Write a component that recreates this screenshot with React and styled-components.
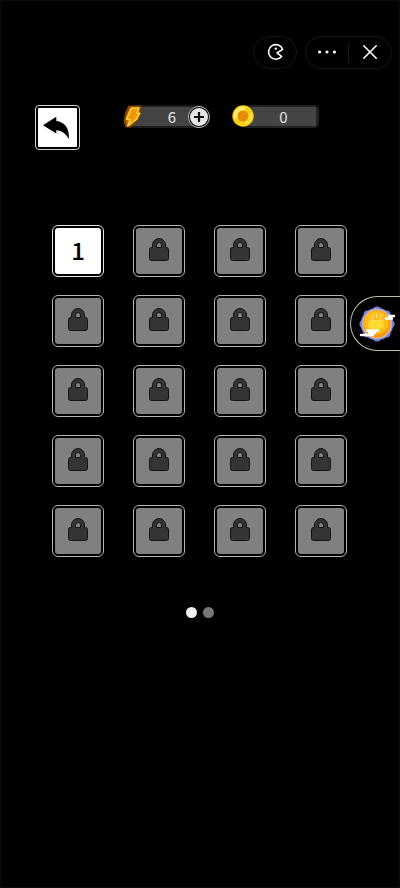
import { useState } from "react";
import styled, { createGlobalStyle } from "styled-components";

const GlobalStyle = createGlobalStyle`
  * {
    box-sizing: border-box;
  }
  body {
    margin: 0;
    background: #000;
    font-family: "Noto Sans CJK SC", "Noto Sans", sans-serif;
  }
  button {
    margin: 0;
    padding: 0;
    border: 0;
    background: none;
    font-family: inherit;
    cursor: pointer;
  }
  svg {
    display: block;
  }
`

const Page = styled.main`
  position: relative;
  min-height: 100vh;
  padding-top: 36px;
  background: #000;
  box-shadow: inset 0 0 0 1px #0b0b0b;
`

const SystemBar = styled.nav`
  display: flex;
  justify-content: flex-end;
  gap: 8px;
  padding-right: 8px;
`

const Capsule = styled.div`
  display: flex;
  align-items: center;
  height: 33px;
  border: 1px solid #161616;
  border-radius: 17px;
`

const CapsuleButton = styled.button`
  display: flex;
  align-items: center;
  justify-content: center;
  width: 42px;
  height: 31px;
  padding-bottom: 1px;
`

const Divider = styled.span`
  width: 1px;
  height: 20px;
  background: #1c1c1c;
`

const Header = styled.header`
  display: flex;
  align-items: flex-start;
  padding: 36px 35px 0;
`

const BackButton = styled.button`
  display: flex;
  align-items: center;
  justify-content: center;
  width: 45px;
  height: 45px;
  padding: 2px;
  border: 1px solid #d0d0d0;
  border-radius: 4px;
  svg {
    width: 100%;
    height: 100%;
    border-radius: 1px;
    background: #fff;
  }
`

const Counters = styled.div`
  display: flex;
  gap: 21px;
  margin-left: 43px;
`

const Counter = styled.div`
  display: flex;
  align-items: center;
  width: ${({ $width }) => $width}px;
  height: 23px;
  border-radius: 5px;
  background:
    linear-gradient(#444, #444) center / calc(100% - 6px) 19px no-repeat,
    #222;
`

const EnergyCounter = styled(Counter)`
  background:
    linear-gradient(#444, #444) center / calc(100% - 20px) 19px no-repeat,
    linear-gradient(#1c1c1c, #1c1c1c) center / calc(100% - 20px) 23px no-repeat;
`

const CoinCounter = styled(Counter)`
  margin-left: 10px;
  padding-right: 6px;
  svg {
    flex: none;
    margin: 0 0 2px -10px;
  }
`

const Amount = styled.span`
  flex: 1;
  padding-left: ${({ $shift }) => $shift}px;
  color: #e4e4e4;
  font-size: 15px;
  line-height: 22px;
  text-align: center;
`

const AddButton = styled.button`
  width: 24px;
  height: 24px;
`

const Levels = styled.section`
  display: grid;
  grid-template-columns: repeat(4, 52px);
  justify-content: center;
  gap: 18px 29px;
  padding: 75px 1px 0 0;
`

const Level = styled.button`
  height: 52px;
  padding: 2px;
  border: 1px solid ${({ $open }) => ($open ? "#e6e6e6" : "#b4b4b4")};
  border-radius: 6px;
`

const Face = styled.span`
  display: flex;
  align-items: center;
  justify-content: center;
  height: 100%;
  padding-bottom: 3px;
  border-radius: 3px;
  background: ${({ $open }) => ($open ? "#fff" : "#808080")};
  color: #000;
  font-size: 24px;
  font-weight: 500;
  line-height: 44px;
`

const Pager = styled.div`
  display: flex;
  justify-content: center;
  gap: 6px;
  padding-top: 50px;
`

const Dot = styled.button`
  width: 11px;
  height: 11px;
  border-radius: 50%;
  background: ${({ $active }) => ($active ? "#f0f0f0" : "#777")};
`

const EventButton = styled.button`
  position: absolute;
  top: 296px;
  right: 0;
  display: flex;
  align-items: center;
  width: 50px;
  height: 55px;
  padding-left: 7px;
  border: 1px solid #c2c1a4;
  border-right: 0;
  border-radius: 28px 0 0 28px;
  background: #000;
`

const Pacman = () => (
  <svg width="18" height="18" viewBox="0 0 18 18" fill="none" stroke="#fff" strokeWidth="1.6" strokeLinejoin="round">
    <path d="M16.7 6.4A7.3 7.3 0 1 0 15.6 13.4L11 9.9Z" />
    <circle cx="9.8" cy="5.6" r="1.2" fill="#fff" stroke="none" />
  </svg>
)

const More = () => (
  <svg width="20" height="6" viewBox="0 0 20 6" fill="#fff">
    <circle cx="2.6" cy="3" r="1.6" />
    <circle cx="10" cy="3" r="1.6" />
    <circle cx="17.4" cy="3" r="1.6" />
  </svg>
)

const Close = () => (
  <svg width="16" height="16" viewBox="0 0 16 16" stroke="#fff" strokeWidth="1.6" strokeLinecap="round">
    <path d="M1.8 1.8 14.2 14.2M14.2 1.8 1.8 14.2" />
  </svg>
)

const BackArrow = () => (
  <svg viewBox="0 0 39 39">
    <path d="M5 17.3 18.3 8.7V13C26.5 14 31.8 20 30.8 31C28 26 24.5 22.6 18.3 22.2V25.6Z" fill="#000" />
  </svg>
)

const Bolt = () => (
  <svg width="22" height="24" viewBox="0 0 22 24" strokeLinejoin="round">
    <path d="M6 1.5H17.5L17 8L14.5 14.5L8 21.5H3L1.5 16L3 8Z" fill="#b96a00" stroke="#7d4500" strokeWidth="2" />
    <path d="M8.5 3H16L14 8.2H16.8L13.5 14.2L4.8 20.8L7 14.8L3.5 14Z" fill="#ee9a08" stroke="#ffd04a" strokeWidth="1.6" />
  </svg>
)

const Plus = () => (
  <svg width="24" height="24" viewBox="0 0 24 24">
    <circle cx="12" cy="12" r="10.6" fill="#151515" stroke="#b0b0b0" />
    <circle cx="12" cy="12" r="9" fill="#e6e6e6" />
    <path d="M12 7V17M7 12H17" stroke="#111" strokeWidth="2.2" />
  </svg>
)

const Coin = () => (
  <svg width="22" height="22" viewBox="0 0 22 22">
    <circle cx="11" cy="11" r="10.7" fill="#f4cf12" />
    <path d="M2.2 14A9.5 9.5 0 0 1 14 2L11 11Z" fill="#ffe96a" />
    <path d="M20 8A9.5 9.5 0 0 1 14 20L11 11Z" fill="#fadd35" />
    <circle cx="11" cy="11" r="5.5" fill="#e58b05" />
  </svg>
)

const Lock = () => (
  <svg width="20" height="24" viewBox="0 0 20 24">
    <path
      d="M3.5 9.5V7a6.5 6.5 0 0 1 13 0V9.5H17.5Q19.5 9.5 19.5 11.5V20.5Q19.5 22.5 17.5 22.5H2.5Q.5 22.5 .5 20.5V11.5Q.5 9.5 2.5 9.5ZM7.5 9.5H12.5V7a2.5 2.5 0 0 0-5 0Z"
      fill="#343434"
      fillRule="evenodd"
      stroke="#141414"
    />
  </svg>
)

const Sun = () => (
  <svg width="38" height="38" viewBox="0 0 38 38">
    <g fill="#6d83dc">
      <circle cx="19" cy="19" r="16.3" />
      <circle cx="19" cy="5.5" r="4" />
      <circle cx="28.5" cy="9.5" r="4" />
      <circle cx="32.5" cy="19" r="4" />
      <circle cx="28.5" cy="28.5" r="4" />
      <circle cx="19" cy="32.5" r="4" />
      <circle cx="9.5" cy="28.5" r="4" />
      <circle cx="5.5" cy="19" r="4" />
      <circle cx="9.5" cy="9.5" r="4" />
    </g>
    <circle cx="19" cy="19" r="15" fill="#dcb8b4" />
    <circle cx="19" cy="19" r="13.8" fill="#f99a17" />
    <ellipse cx="18.5" cy="17.5" rx="12.3" ry="11.5" fill="#ffbd1c" />
    <ellipse cx="18" cy="20" rx="8" ry="5" fill="#ffda2f" />
    <path d="M14 10 15.5 12.5M18.5 9V12M23.5 10 22 12.5M12 15.5Q14 13.5 16 15.5M21 15.5Q23 13.5 25 15.5" fill="none" stroke="#fff0a8" strokeLinecap="round" />
    <path d="M9 25.5H20M3 30H15M11 28H17M31 11H36M28 13.5H34" stroke="#fff" strokeWidth="2.4" strokeLinecap="round" />
  </svg>
)

const levels = Array.from({ length: 20 }, (_, i) => i + 1)

const App = () => {
  const [page, setPage] = useState(0)

  return (
    <>
      <GlobalStyle />
      <Page>
        <SystemBar>
          <Capsule>
            <CapsuleButton aria-label="Games"><Pacman /></CapsuleButton>
          </Capsule>
          <Capsule>
            <CapsuleButton aria-label="More"><More /></CapsuleButton>
            <Divider />
            <CapsuleButton aria-label="Close"><Close /></CapsuleButton>
          </Capsule>
        </SystemBar>
        <Header>
          <BackButton aria-label="Back"><BackArrow /></BackButton>
          <Counters>
            <EnergyCounter $width={88}>
              <Bolt />
              <Amount $shift={12}>6</Amount>
              <AddButton aria-label="Add energy"><Plus /></AddButton>
            </EnergyCounter>
            <CoinCounter $width={77}>
              <Coin />
              <Amount $shift={0}>0</Amount>
            </CoinCounter>
          </Counters>
        </Header>
        <Levels>
          {levels.map((n) => (
            <Level key={n} $open={n === 1} disabled={n !== 1} aria-label={`Level ${n}`}>
              <Face $open={n === 1}>{n === 1 ? n : <Lock />}</Face>
            </Level>
          ))}
        </Levels>
        <Pager>
          {[0, 1].map((n) => (
            <Dot key={n} $active={page === n} aria-label={`Page ${n + 1}`} onClick={() => setPage(n)} />
          ))}
        </Pager>
        <EventButton aria-label="Event"><Sun /></EventButton>
      </Page>
    </>
  )
}

export default App;
